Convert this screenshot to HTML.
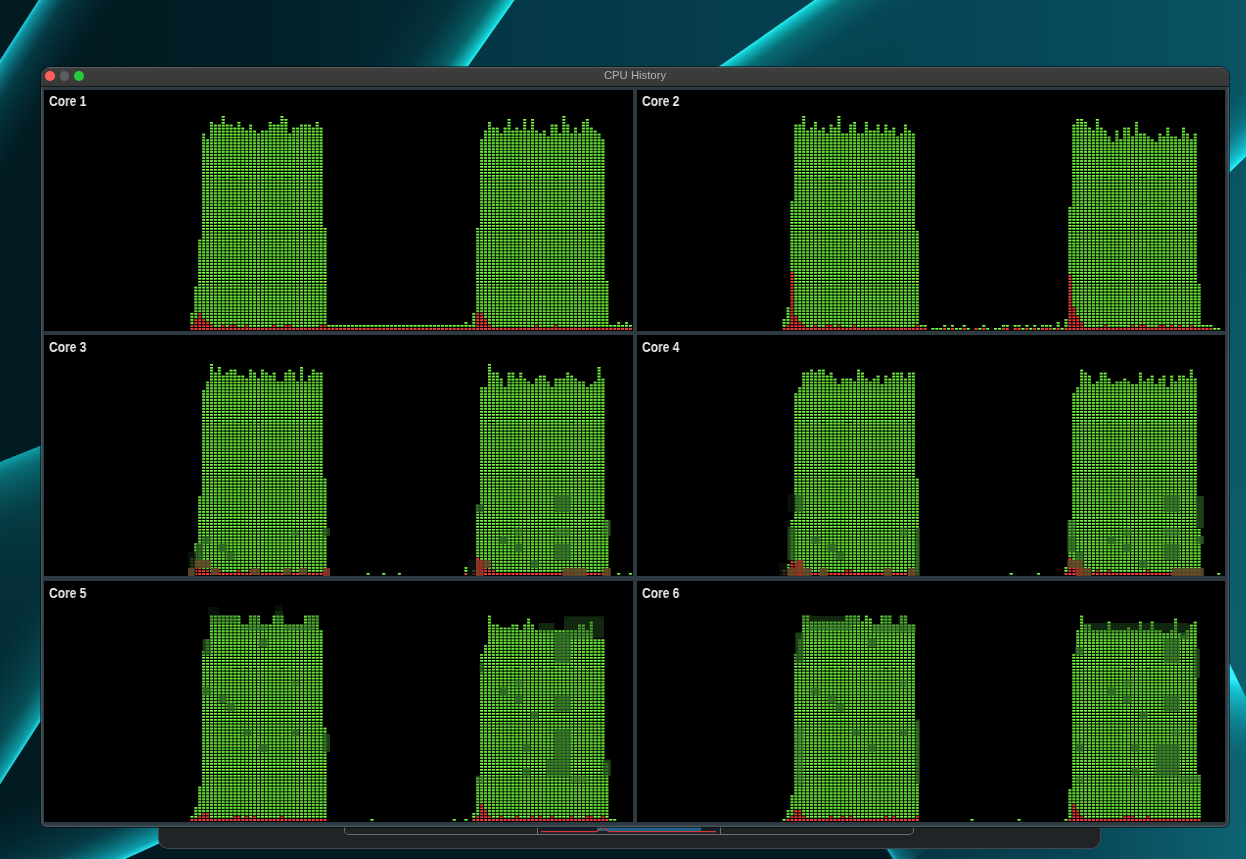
<!DOCTYPE html>
<html><head><meta charset="utf-8"><style>
html,body{margin:0;padding:0;width:1246px;height:859px;overflow:hidden;background:#021b22}
.abs{position:absolute}
.win{position:absolute;left:40.5px;top:66.5px;width:1188px;height:760px;border-radius:9px 9px 6px 6px;background:#2d3a41;box-shadow:0 0 0 1px rgba(0,10,15,0.6), inset 0 0 0 1.5px rgba(120,130,135,0.35);overflow:hidden}
.tb{position:absolute;left:0;top:0;width:1188px;height:20px;background:linear-gradient(#3e3e3e,#383838);border-top:1.5px solid #5c5c5c;box-sizing:border-box;border-bottom:1px solid #14191b}
.tl{position:absolute;top:3.6px;width:9.8px;height:9.8px;border-radius:50%}
.title{position:absolute;left:0;top:1.4px;width:1188px;text-align:center;font:11.3px "Liberation Sans",sans-serif;color:#b0b0b0;will-change:transform}
.panel{position:absolute;background:#000}
.lbl{position:absolute;font:bold 13.8px "Liberation Sans",sans-serif;color:#ececec;line-height:14px;transform:scaleX(0.87);transform-origin:0 0;will-change:transform}
.dock{position:absolute;left:159px;top:820px;width:941px;height:28px;background:#202426;border-radius:0 0 9px 9px;box-shadow:0 0 0 1px #45484b}
.tray{position:absolute;left:345px;top:820px;width:568px;height:14px;background:#1e2224;border-radius:0 0 4px 4px;box-shadow:0 0 0 1px #6a6d70}
.mini{position:absolute;left:538px;top:820px;width:182px;height:13.5px;background:#16212a;box-shadow:0 0 0 1px #707070}
</style></head><body>
<svg width="1246" height="859" style="position:absolute;left:0;top:0"><defs><linearGradient id="baseTop" gradientUnits="userSpaceOnUse" x1="60" y1="0" x2="470" y2="0"><stop offset="0" stop-color="#021a21"/><stop offset="0.45" stop-color="#021e26"/><stop offset="1" stop-color="#042c36"/></linearGradient><linearGradient id="tealTop" gradientUnits="userSpaceOnUse" x1="460" y1="0" x2="1246" y2="0"><stop offset="0" stop-color="#043644"/><stop offset="0.3" stop-color="#053d4b"/><stop offset="0.7" stop-color="#064756"/><stop offset="1" stop-color="#095363"/></linearGradient><linearGradient id="rstrip" gradientUnits="userSpaceOnUse" x1="0" y1="67" x2="0" y2="859"><stop offset="0" stop-color="#095363"/><stop offset="0.5" stop-color="#0c5a68"/><stop offset="1" stop-color="#0e6272"/></linearGradient><linearGradient id="brt" gradientUnits="userSpaceOnUse" x1="880" y1="0" x2="1246" y2="0"><stop offset="0" stop-color="#043240"/><stop offset="0.5" stop-color="#074454"/><stop offset="1" stop-color="#0e6474"/></linearGradient><linearGradient id="gA" gradientUnits="userSpaceOnUse" x1="45.0" y1="-10.0" x2="99.7" y2="25.1"><stop offset="0" stop-color="#20d0e0" stop-opacity="1"/><stop offset="0.06" stop-color="#12a8b8" stop-opacity="0.85"/><stop offset="0.35" stop-color="#0a6a78" stop-opacity="0.4"/><stop offset="1" stop-color="#06404c" stop-opacity="0"/></linearGradient><linearGradient id="gB" gradientUnits="userSpaceOnUse" x1="535.6" y1="-30.0" x2="462.0" y2="-81.7"><stop offset="0" stop-color="#28f0f4" stop-opacity="1"/><stop offset="0.04" stop-color="#12d8dc" stop-opacity="0.9"/><stop offset="0.2" stop-color="#0a9a9e" stop-opacity="0.5"/><stop offset="0.55" stop-color="#08626a" stop-opacity="0.15"/><stop offset="1" stop-color="#08505e" stop-opacity="0"/></linearGradient><linearGradient id="gC" gradientUnits="userSpaceOnUse" x1="843.2" y1="-20.0" x2="891.8" y2="49.8"><stop offset="0" stop-color="#28f0f4" stop-opacity="1"/><stop offset="0.04" stop-color="#12d8dc" stop-opacity="0.9"/><stop offset="0.2" stop-color="#0a9a9e" stop-opacity="0.5"/><stop offset="0.55" stop-color="#08626a" stop-opacity="0.15"/><stop offset="1" stop-color="#08505e" stop-opacity="0"/></linearGradient><linearGradient id="gD" gradientUnits="userSpaceOnUse" x1="1237" y1="165" x2="1196" y2="121.5"><stop offset="0" stop-color="#30f0fc" stop-opacity="1"/><stop offset="0.08" stop-color="#18d4e4" stop-opacity="0.9"/><stop offset="0.45" stop-color="#0c98a8" stop-opacity="0.45"/><stop offset="1" stop-color="#095363" stop-opacity="0"/></linearGradient><linearGradient id="lband" gradientUnits="userSpaceOnUse" x1="0" y1="450" x2="0" y2="780"><stop offset="0" stop-color="#07454c"/><stop offset="0.35" stop-color="#04303a"/><stop offset="1" stop-color="#03252c"/></linearGradient><linearGradient id="gE" gradientUnits="userSpaceOnUse" x1="-77.5" y1="493.0" x2="-44.1" y2="576.6"><stop offset="0" stop-color="#0ea0a8" stop-opacity="1"/><stop offset="0.15" stop-color="#0a7c84" stop-opacity="0.7"/><stop offset="0.6" stop-color="#06484e" stop-opacity="0.3"/><stop offset="1" stop-color="#04343a" stop-opacity="0"/></linearGradient><linearGradient id="gF" gradientUnits="userSpaceOnUse" x1="19.5" y1="754.0" x2="-47.8" y2="710.8"><stop offset="0" stop-color="#24e0ec" stop-opacity="1"/><stop offset="0.05" stop-color="#12b4c0" stop-opacity="0.85"/><stop offset="0.3" stop-color="#0a7880" stop-opacity="0.45"/><stop offset="1" stop-color="#06404c" stop-opacity="0"/></linearGradient><linearGradient id="gG" gradientUnits="userSpaceOnUse" x1="77.0" y1="881.0" x2="37.6" y2="794.6"><stop offset="0" stop-color="#22e4f0" stop-opacity="1"/><stop offset="0.06" stop-color="#10b4c4" stop-opacity="0.85"/><stop offset="0.35" stop-color="#0a6a78" stop-opacity="0.4"/><stop offset="1" stop-color="#06404c" stop-opacity="0"/></linearGradient><linearGradient id="gH" gradientUnits="userSpaceOnUse" x1="1237" y1="680" x2="1224" y2="770"><stop offset="0" stop-color="#30f0fc" stop-opacity="1"/><stop offset="0.1" stop-color="#18d0e0" stop-opacity="0.9"/><stop offset="0.5" stop-color="#0c9aa8" stop-opacity="0.5"/><stop offset="1" stop-color="#0c5a68" stop-opacity="0"/></linearGradient><linearGradient id="gI" gradientUnits="userSpaceOnUse" x1="889.5" y1="853.0" x2="931.7" y2="826.2"><stop offset="0" stop-color="#1cc8d8" stop-opacity="0.9"/><stop offset="0.1" stop-color="#0e98a8" stop-opacity="0.6"/><stop offset="0.5" stop-color="#08606e" stop-opacity="0.25"/><stop offset="1" stop-color="#08505e" stop-opacity="0"/></linearGradient></defs><rect x="0" y="0" width="1246" height="859" fill="#021b22"/><rect x="0" y="0" width="620" height="70" fill="url(#baseTop)"/><polygon points="527,-20 1266,-20 1266,90 449.9,90" fill="url(#tealTop)"/><rect x="1200" y="67" width="60" height="800" fill="url(#rstrip)"/><polygon points="870,826 1266,826 1266,870 899,870" fill="url(#brt)"/><polygon points="167.0,-200.0 -77.0,180.0 -22.3,215.1 221.7,-164.9" fill="url(#gA)"/><polygon points="655.0,-200.0 416.3,140.0 342.6,88.3 581.3,-251.7" fill="url(#gB)"/><polygon points="1101.8,-200.0 584.6,160.0 633.2,229.8 1150.4,-130.2" fill="url(#gC)"/><polygon points="1228,174 1250,152.7 1250,67 1228,67" fill="url(#gD)"/><polygon points="-5,464 45,444 45,714 -5,792" fill="url(#lband)"/><polygon points="-200.0,542.0 45.0,444.0 78.4,527.6 -166.6,625.6" fill="url(#gE)"/><polygon points="99.0,630.0 -60.0,878.0 -127.3,834.8 31.7,586.8" fill="url(#gF)"/><polygon points="180.0,834.0 -26.0,928.0 -65.4,841.6 140.6,747.6" fill="url(#gG)"/><polygon points="1228,660 1250,706 1250,800 1228,800" fill="url(#gH)"/><polygon points="880.0,838.0 899.0,868.0 941.2,841.2 922.2,811.2" fill="url(#gI)"/></svg>
<div class="dock"></div>
<div class="tray"></div>
<div class="mini"></div>
<svg class="abs" style="left:0;top:0" width="1246" height="859">
 <rect x="597" y="826.5" width="104" height="4.5" fill="#1f6388"/>
 <path d="M541 831.6 H596 C600 831.6 601 826.8 603 826.8 C605 826.8 606 831.6 610 831.6 H716" stroke="#d23a3a" stroke-width="1.3" fill="none"/>
</svg>
<div class="win">
 <div class="tb">
  <div class="tl" style="left:4.8px;background:#fe5f57"></div>
  <div class="tl" style="left:19.2px;background:#5b5e61"></div>
  <div class="tl" style="left:33.9px;background:#27c93f"></div>
  <div class="title">CPU History</div>
 </div>
</div>
<div class="panel" style="left:44px;top:90px;width:589px;height:241px"></div>
<div class="panel" style="left:637px;top:90px;width:588px;height:241px"></div>
<div class="panel" style="left:44px;top:335px;width:589px;height:241px"></div>
<div class="panel" style="left:637px;top:335px;width:588px;height:241px"></div>
<div class="panel" style="left:44px;top:581px;width:589px;height:241px"></div>
<div class="panel" style="left:637px;top:581px;width:588px;height:241px"></div>
<svg width="1246" height="859" style="position:absolute;left:0;top:0"><g><path d="M191.90 324.14V312.36M195.82 318.25V285.86M199.74 312.36V238.73M203.65 318.25V132.72M207.56 321.19V138.60M211.48 324.14V120.94M215.39 327.08V123.88M219.31 327.08V123.88M223.23 324.14V115.04M227.14 327.08V123.88M231.06 324.14V123.88M234.97 324.14V126.82M238.88 327.08V120.94M242.80 327.08V126.82M246.71 324.14V129.77M250.63 327.08V123.88M254.55 327.08V129.77M258.46 327.08V132.72M262.38 327.08V129.77M266.29 327.08V129.77M270.20 327.08V120.94M274.12 324.14V123.88M278.04 327.08V123.88M281.95 327.08V115.04M285.87 324.14V117.99M289.78 324.14V132.72M293.69 327.08V126.82M297.61 327.08V126.82M301.52 327.08V123.88M305.44 327.08V123.88M309.36 327.08V123.88M313.27 327.08V126.82M317.19 327.08V120.94M321.10 324.14V126.82M325.01 324.14V226.95M328.93 327.08V324.14M332.85 327.08V324.14M336.76 327.08V324.14M340.68 327.08V324.14M344.59 327.08V324.14M348.50 327.08V324.14M352.42 327.08V324.14M356.34 327.08V324.14M360.25 327.08V324.14M364.17 327.08V324.14M368.08 327.08V324.14M372.00 327.08V324.14M375.91 327.08V324.14M379.82 327.08V324.14M383.74 327.08V324.14M387.66 327.08V324.14M391.57 327.08V324.14M395.49 327.08V324.14M399.40 327.08V324.14M403.31 327.08V324.14M407.23 327.08V324.14M411.15 327.08V324.14M415.06 327.08V324.14M418.98 327.08V324.14M422.89 327.08V324.14M426.81 327.08V324.14M430.72 327.08V324.14M434.63 327.08V324.14M438.55 327.08V324.14M442.47 327.08V324.14M446.38 327.08V324.14M450.30 327.08V324.14M454.21 327.08V324.14M458.12 327.08V324.14M462.04 327.08V324.14M465.96 327.08V321.19M469.87 327.08V324.14M473.79 327.08V312.36M477.70 312.36V226.95M481.62 312.36V138.60M485.53 318.25V129.77M489.44 324.14V120.94M493.36 327.08V126.82M497.28 327.08V126.82M501.19 327.08V132.72M505.11 327.08V126.82M509.02 327.08V117.99M512.93 327.08V129.77M516.85 327.08V126.82M520.76 327.08V129.77M524.68 327.08V117.99M528.60 327.08V129.77M532.51 327.08V117.99M536.42 324.14V129.77M540.34 327.08V132.72M544.25 327.08V129.77M548.17 327.08V135.66M552.09 327.08V123.88M556.00 324.14V123.88M559.91 327.08V132.72M563.83 327.08V115.04M567.75 327.08V123.88M571.66 327.08V132.72M575.57 327.08V126.82M579.49 327.08V132.72M583.40 327.08V120.94M587.32 327.08V117.99M591.24 327.08V126.82M595.15 327.08V129.77M599.06 327.08V132.72M602.98 327.08V138.60M606.89 327.08V279.96M610.81 327.08V324.14M614.72 327.08V324.14M618.64 327.08V321.19M622.55 327.08V324.14M626.47 327.08V321.19M630.38 327.08V324.14" stroke="#3cc020" stroke-width="2.94" stroke-dasharray="1.96 0.985" fill="none"/><path d="M191.90 324.14V312.36M195.82 318.25V285.86M199.74 312.36V238.73M203.65 318.25V132.72M207.56 321.19V138.60M211.48 324.14V120.94M215.39 327.08V123.88M219.31 327.08V123.88M223.23 324.14V115.04M227.14 327.08V123.88M231.06 324.14V123.88M234.97 324.14V126.82M238.88 327.08V120.94M242.80 327.08V126.82M246.71 324.14V129.77M250.63 327.08V123.88M254.55 327.08V129.77M258.46 327.08V132.72M262.38 327.08V129.77M266.29 327.08V129.77M270.20 327.08V120.94M274.12 324.14V123.88M278.04 327.08V123.88M281.95 327.08V115.04M285.87 324.14V117.99M289.78 324.14V132.72M293.69 327.08V126.82M297.61 327.08V126.82M301.52 327.08V123.88M305.44 327.08V123.88M309.36 327.08V123.88M313.27 327.08V126.82M317.19 327.08V120.94M321.10 324.14V126.82M325.01 324.14V226.95M328.93 327.08V324.14M332.85 327.08V324.14M336.76 327.08V324.14M340.68 327.08V324.14M344.59 327.08V324.14M348.50 327.08V324.14M352.42 327.08V324.14M356.34 327.08V324.14M360.25 327.08V324.14M364.17 327.08V324.14M368.08 327.08V324.14M372.00 327.08V324.14M375.91 327.08V324.14M379.82 327.08V324.14M383.74 327.08V324.14M387.66 327.08V324.14M391.57 327.08V324.14M395.49 327.08V324.14M399.40 327.08V324.14M403.31 327.08V324.14M407.23 327.08V324.14M411.15 327.08V324.14M415.06 327.08V324.14M418.98 327.08V324.14M422.89 327.08V324.14M426.81 327.08V324.14M430.72 327.08V324.14M434.63 327.08V324.14M438.55 327.08V324.14M442.47 327.08V324.14M446.38 327.08V324.14M450.30 327.08V324.14M454.21 327.08V324.14M458.12 327.08V324.14M462.04 327.08V324.14M465.96 327.08V321.19M469.87 327.08V324.14M473.79 327.08V312.36M477.70 312.36V226.95M481.62 312.36V138.60M485.53 318.25V129.77M489.44 324.14V120.94M493.36 327.08V126.82M497.28 327.08V126.82M501.19 327.08V132.72M505.11 327.08V126.82M509.02 327.08V117.99M512.93 327.08V129.77M516.85 327.08V126.82M520.76 327.08V129.77M524.68 327.08V117.99M528.60 327.08V129.77M532.51 327.08V117.99M536.42 324.14V129.77M540.34 327.08V132.72M544.25 327.08V129.77M548.17 327.08V135.66M552.09 327.08V123.88M556.00 324.14V123.88M559.91 327.08V132.72M563.83 327.08V115.04M567.75 327.08V123.88M571.66 327.08V132.72M575.57 327.08V126.82M579.49 327.08V132.72M583.40 327.08V120.94M587.32 327.08V117.99M591.24 327.08V126.82M595.15 327.08V129.77M599.06 327.08V132.72M602.98 327.08V138.60M606.89 327.08V279.96M610.81 327.08V324.14M614.72 327.08V324.14M618.64 327.08V321.19M622.55 327.08V324.14M626.47 327.08V321.19M630.38 327.08V324.14" stroke="#90f050" stroke-width="2.94" stroke-dasharray="0 0.980 0.980 0.985" fill="none"/><path d="M191.90 330.03V324.14M195.82 330.03V318.25M199.74 330.03V312.36M203.65 330.03V318.25M207.56 330.03V321.19M211.48 330.03V324.14M215.39 330.03V327.08M219.31 330.03V327.08M223.23 330.03V324.14M227.14 330.03V327.08M231.06 330.03V324.14M234.97 330.03V324.14M238.88 330.03V327.08M242.80 330.03V327.08M246.71 330.03V324.14M250.63 330.03V327.08M254.55 330.03V327.08M258.46 330.03V327.08M262.38 330.03V327.08M266.29 330.03V327.08M270.20 330.03V327.08M274.12 330.03V324.14M278.04 330.03V327.08M281.95 330.03V327.08M285.87 330.03V324.14M289.78 330.03V324.14M293.69 330.03V327.08M297.61 330.03V327.08M301.52 330.03V327.08M305.44 330.03V327.08M309.36 330.03V327.08M313.27 330.03V327.08M317.19 330.03V327.08M321.10 330.03V324.14M325.01 330.03V324.14M328.93 330.03V327.08M332.85 330.03V327.08M336.76 330.03V327.08M340.68 330.03V327.08M344.59 330.03V327.08M348.50 330.03V327.08M352.42 330.03V327.08M356.34 330.03V327.08M360.25 330.03V327.08M364.17 330.03V327.08M368.08 330.03V327.08M372.00 330.03V327.08M375.91 330.03V327.08M379.82 330.03V327.08M383.74 330.03V327.08M387.66 330.03V327.08M391.57 330.03V327.08M395.49 330.03V327.08M399.40 330.03V327.08M403.31 330.03V327.08M407.23 330.03V327.08M411.15 330.03V327.08M415.06 330.03V327.08M418.98 330.03V327.08M422.89 330.03V327.08M426.81 330.03V327.08M430.72 330.03V327.08M434.63 330.03V327.08M438.55 330.03V327.08M442.47 330.03V327.08M446.38 330.03V327.08M450.30 330.03V327.08M454.21 330.03V327.08M458.12 330.03V327.08M462.04 330.03V327.08M465.96 330.03V327.08M469.87 330.03V327.08M473.79 330.03V327.08M477.70 330.03V312.36M481.62 330.03V312.36M485.53 330.03V318.25M489.44 330.03V324.14M493.36 330.03V327.08M497.28 330.03V327.08M501.19 330.03V327.08M505.11 330.03V327.08M509.02 330.03V327.08M512.93 330.03V327.08M516.85 330.03V327.08M520.76 330.03V327.08M524.68 330.03V327.08M528.60 330.03V327.08M532.51 330.03V327.08M536.42 330.03V324.14M540.34 330.03V327.08M544.25 330.03V327.08M548.17 330.03V327.08M552.09 330.03V327.08M556.00 330.03V324.14M559.91 330.03V327.08M563.83 330.03V327.08M567.75 330.03V327.08M571.66 330.03V327.08M575.57 330.03V327.08M579.49 330.03V327.08M583.40 330.03V327.08M587.32 330.03V327.08M591.24 330.03V327.08M595.15 330.03V327.08M599.06 330.03V327.08M602.98 330.03V327.08M606.89 330.03V327.08M610.81 330.03V327.08M614.72 330.03V327.08M618.64 330.03V327.08M622.55 330.03V327.08M626.47 330.03V327.08M630.38 330.03V327.08" stroke="#f03c3c" stroke-width="2.94" stroke-dasharray="1.96 0.985" fill="none"/><path d="M784.12 327.08V318.25M788.04 324.14V306.47M791.95 271.13V200.45M795.87 315.30V123.88M799.78 321.19V123.88M803.70 324.14V115.04M807.62 327.08V129.77M811.53 327.08V126.82M815.44 324.14V120.94M819.36 327.08V129.77M823.27 327.08V126.82M827.19 324.14V132.72M831.11 324.14V123.88M835.02 327.08V126.82M838.93 324.14V115.04M842.85 327.08V132.72M846.76 327.08V132.72M850.68 327.08V123.88M854.60 324.14V120.94M858.51 327.08V132.72M862.42 327.08V132.72M866.34 327.08V120.94M870.25 327.08V129.77M874.17 327.08V129.77M878.09 327.08V123.88M882.00 327.08V132.72M885.91 327.08V123.88M889.83 327.08V129.77M893.75 327.08V126.82M897.66 327.08V135.66M901.58 327.08V132.72M905.49 327.08V123.88M909.40 327.08V129.77M913.32 327.08V132.72M917.23 324.14V229.90M921.15 327.08V324.14M925.07 327.08V324.14M932.89 330.03V327.08M936.81 330.03V327.08M940.72 330.03V327.08M944.64 327.08V324.14M948.56 330.03V327.08M952.47 327.08V324.14M956.38 330.03V327.08M960.30 330.03V327.08M964.21 327.08V324.14M968.13 330.03V327.08M979.88 330.03V327.08M983.79 327.08V324.14M987.70 330.03V327.08M995.53 330.03V327.08M999.45 330.03V327.08M1003.37 327.08V324.14M1007.28 327.08V324.14M1015.11 327.08V324.14M1019.02 327.08V324.14M1022.94 330.03V327.08M1026.86 327.08V324.14M1030.77 330.03V327.08M1034.68 327.08V324.14M1038.60 330.03V327.08M1042.51 327.08V324.14M1046.43 327.08V324.14M1050.35 327.08V324.14M1054.26 330.03V327.08M1058.17 327.08V321.19M1062.09 330.03V327.08M1066.01 327.08V318.25M1069.92 274.07V206.34M1073.84 306.47V123.88M1077.75 315.30V117.99M1081.66 321.19V117.99M1085.58 327.08V120.94M1089.49 327.08V126.82M1093.41 327.08V129.77M1097.33 327.08V117.99M1101.24 327.08V126.82M1105.15 324.14V129.77M1109.07 327.08V135.66M1112.99 327.08V141.55M1116.90 327.08V129.77M1120.82 327.08V138.60M1124.73 327.08V126.82M1128.64 327.08V126.82M1132.56 324.14V135.66M1136.47 327.08V120.94M1140.39 324.14V132.72M1144.31 324.14V132.72M1148.22 327.08V135.66M1152.13 327.08V138.60M1156.05 327.08V141.55M1159.97 324.14V132.72M1163.88 324.14V135.66M1167.80 327.08V126.82M1171.71 324.14V135.66M1175.62 327.08V135.66M1179.54 324.14V138.60M1183.45 327.08V126.82M1187.37 327.08V132.72M1191.28 324.14V138.60M1195.20 327.08V132.72M1199.12 327.08V282.91M1203.03 327.08V324.14M1206.94 327.08V324.14M1210.86 327.08V324.14M1214.78 330.03V327.08M1218.69 330.03V327.08" stroke="#3cc020" stroke-width="2.94" stroke-dasharray="1.96 0.985" fill="none"/><path d="M784.12 327.08V318.25M788.04 324.14V306.47M791.95 271.13V200.45M795.87 315.30V123.88M799.78 321.19V123.88M803.70 324.14V115.04M807.62 327.08V129.77M811.53 327.08V126.82M815.44 324.14V120.94M819.36 327.08V129.77M823.27 327.08V126.82M827.19 324.14V132.72M831.11 324.14V123.88M835.02 327.08V126.82M838.93 324.14V115.04M842.85 327.08V132.72M846.76 327.08V132.72M850.68 327.08V123.88M854.60 324.14V120.94M858.51 327.08V132.72M862.42 327.08V132.72M866.34 327.08V120.94M870.25 327.08V129.77M874.17 327.08V129.77M878.09 327.08V123.88M882.00 327.08V132.72M885.91 327.08V123.88M889.83 327.08V129.77M893.75 327.08V126.82M897.66 327.08V135.66M901.58 327.08V132.72M905.49 327.08V123.88M909.40 327.08V129.77M913.32 327.08V132.72M917.23 324.14V229.90M921.15 327.08V324.14M925.07 327.08V324.14M932.89 330.03V327.08M936.81 330.03V327.08M940.72 330.03V327.08M944.64 327.08V324.14M948.56 330.03V327.08M952.47 327.08V324.14M956.38 330.03V327.08M960.30 330.03V327.08M964.21 327.08V324.14M968.13 330.03V327.08M979.88 330.03V327.08M983.79 327.08V324.14M987.70 330.03V327.08M995.53 330.03V327.08M999.45 330.03V327.08M1003.37 327.08V324.14M1007.28 327.08V324.14M1015.11 327.08V324.14M1019.02 327.08V324.14M1022.94 330.03V327.08M1026.86 327.08V324.14M1030.77 330.03V327.08M1034.68 327.08V324.14M1038.60 330.03V327.08M1042.51 327.08V324.14M1046.43 327.08V324.14M1050.35 327.08V324.14M1054.26 330.03V327.08M1058.17 327.08V321.19M1062.09 330.03V327.08M1066.01 327.08V318.25M1069.92 274.07V206.34M1073.84 306.47V123.88M1077.75 315.30V117.99M1081.66 321.19V117.99M1085.58 327.08V120.94M1089.49 327.08V126.82M1093.41 327.08V129.77M1097.33 327.08V117.99M1101.24 327.08V126.82M1105.15 324.14V129.77M1109.07 327.08V135.66M1112.99 327.08V141.55M1116.90 327.08V129.77M1120.82 327.08V138.60M1124.73 327.08V126.82M1128.64 327.08V126.82M1132.56 324.14V135.66M1136.47 327.08V120.94M1140.39 324.14V132.72M1144.31 324.14V132.72M1148.22 327.08V135.66M1152.13 327.08V138.60M1156.05 327.08V141.55M1159.97 324.14V132.72M1163.88 324.14V135.66M1167.80 327.08V126.82M1171.71 324.14V135.66M1175.62 327.08V135.66M1179.54 324.14V138.60M1183.45 327.08V126.82M1187.37 327.08V132.72M1191.28 324.14V138.60M1195.20 327.08V132.72M1199.12 327.08V282.91M1203.03 327.08V324.14M1206.94 327.08V324.14M1210.86 327.08V324.14M1214.78 330.03V327.08M1218.69 330.03V327.08" stroke="#90f050" stroke-width="2.94" stroke-dasharray="0 0.980 0.980 0.985" fill="none"/><path d="M784.12 330.03V327.08M788.04 330.03V324.14M791.95 330.03V271.13M795.87 330.03V315.30M799.78 330.03V321.19M803.70 330.03V324.14M807.62 330.03V327.08M811.53 330.03V327.08M815.44 330.03V324.14M819.36 330.03V327.08M823.27 330.03V327.08M827.19 330.03V324.14M831.11 330.03V324.14M835.02 330.03V327.08M838.93 330.03V324.14M842.85 330.03V327.08M846.76 330.03V327.08M850.68 330.03V327.08M854.60 330.03V324.14M858.51 330.03V327.08M862.42 330.03V327.08M866.34 330.03V327.08M870.25 330.03V327.08M874.17 330.03V327.08M878.09 330.03V327.08M882.00 330.03V327.08M885.91 330.03V327.08M889.83 330.03V327.08M893.75 330.03V327.08M897.66 330.03V327.08M901.58 330.03V327.08M905.49 330.03V327.08M909.40 330.03V327.08M913.32 330.03V327.08M917.23 330.03V324.14M921.15 330.03V327.08M925.07 330.03V327.08M944.64 330.03V327.08M952.47 330.03V327.08M964.21 330.03V327.08M975.96 330.03V327.08M983.79 330.03V327.08M1003.37 330.03V327.08M1007.28 330.03V327.08M1015.11 330.03V327.08M1019.02 330.03V327.08M1026.86 330.03V327.08M1034.68 330.03V327.08M1042.51 330.03V327.08M1046.43 330.03V327.08M1050.35 330.03V327.08M1058.17 330.03V327.08M1066.01 330.03V327.08M1069.92 330.03V274.07M1073.84 330.03V306.47M1077.75 330.03V315.30M1081.66 330.03V321.19M1085.58 330.03V327.08M1089.49 330.03V327.08M1093.41 330.03V327.08M1097.33 330.03V327.08M1101.24 330.03V327.08M1105.15 330.03V324.14M1109.07 330.03V327.08M1112.99 330.03V327.08M1116.90 330.03V327.08M1120.82 330.03V327.08M1124.73 330.03V327.08M1128.64 330.03V327.08M1132.56 330.03V324.14M1136.47 330.03V327.08M1140.39 330.03V324.14M1144.31 330.03V324.14M1148.22 330.03V327.08M1152.13 330.03V327.08M1156.05 330.03V327.08M1159.97 330.03V324.14M1163.88 330.03V324.14M1167.80 330.03V327.08M1171.71 330.03V324.14M1175.62 330.03V327.08M1179.54 330.03V324.14M1183.45 330.03V327.08M1187.37 330.03V327.08M1191.28 330.03V324.14M1195.20 330.03V327.08M1199.12 330.03V327.08M1203.03 330.03V327.08M1206.94 330.03V327.08M1210.86 330.03V327.08" stroke="#f03c3c" stroke-width="2.94" stroke-dasharray="1.96 0.985" fill="none"/><path d="M191.90 569.14V557.36M195.82 566.19V542.63M199.74 566.19V495.51M203.65 569.14V389.50M207.56 569.14V380.66M211.48 572.08V362.99M215.39 569.14V371.82M219.31 569.14V365.94M223.23 572.08V374.77M227.14 572.08V371.82M231.06 572.08V368.88M234.97 572.08V368.88M238.88 569.14V374.77M242.80 572.08V374.77M246.71 572.08V377.71M250.63 569.14V368.88M254.55 572.08V371.82M258.46 569.14V377.72M262.38 572.08V368.88M266.29 572.08V371.82M270.20 572.08V374.77M274.12 572.08V371.82M278.04 572.08V380.66M281.95 572.08V380.66M285.87 572.08V371.82M289.78 572.08V368.88M293.69 572.08V371.82M297.61 572.08V380.66M301.52 572.08V365.93M305.44 572.08V380.66M309.36 572.08V374.77M313.27 572.08V368.88M317.19 572.08V371.82M321.10 572.08V371.82M325.01 572.08V477.84M368.08 575.03V572.08M383.74 575.03V572.08M399.40 575.03V572.08M465.96 572.08V566.19M473.79 572.08V569.14M477.70 557.36V504.35M481.62 560.30V386.55M485.53 566.19V386.55M489.44 569.14V362.99M493.36 569.14V371.82M497.28 572.08V371.82M501.19 572.08V377.71M505.11 572.08V386.55M509.02 572.08V371.82M512.93 572.08V371.82M516.85 572.08V377.71M520.76 572.08V371.82M524.68 572.08V377.71M528.60 572.08V380.66M532.51 572.08V383.60M536.42 572.08V377.71M540.34 572.08V374.77M544.25 572.08V374.77M548.17 572.08V380.66M552.09 572.08V386.55M556.00 572.08V377.71M559.91 572.08V377.71M563.83 572.08V377.71M567.75 572.08V371.82M571.66 569.14V374.77M575.57 572.08V377.71M579.49 572.08V380.66M583.40 572.08V380.66M587.32 572.08V386.55M591.24 572.08V383.60M595.15 572.08V380.66M599.06 572.08V365.93M602.98 572.08V377.71M606.89 572.08V519.07M618.64 575.03V572.08M630.38 575.03V572.08" stroke="#3cc020" stroke-width="2.94" stroke-dasharray="1.96 0.985" fill="none"/><path d="M191.90 569.14V557.36M195.82 566.19V542.63M199.74 566.19V495.51M203.65 569.14V389.50M207.56 569.14V380.66M211.48 572.08V362.99M215.39 569.14V371.82M219.31 569.14V365.94M223.23 572.08V374.77M227.14 572.08V371.82M231.06 572.08V368.88M234.97 572.08V368.88M238.88 569.14V374.77M242.80 572.08V374.77M246.71 572.08V377.71M250.63 569.14V368.88M254.55 572.08V371.82M258.46 569.14V377.72M262.38 572.08V368.88M266.29 572.08V371.82M270.20 572.08V374.77M274.12 572.08V371.82M278.04 572.08V380.66M281.95 572.08V380.66M285.87 572.08V371.82M289.78 572.08V368.88M293.69 572.08V371.82M297.61 572.08V380.66M301.52 572.08V365.93M305.44 572.08V380.66M309.36 572.08V374.77M313.27 572.08V368.88M317.19 572.08V371.82M321.10 572.08V371.82M325.01 572.08V477.84M368.08 575.03V572.08M383.74 575.03V572.08M399.40 575.03V572.08M465.96 572.08V566.19M473.79 572.08V569.14M477.70 557.36V504.35M481.62 560.30V386.55M485.53 566.19V386.55M489.44 569.14V362.99M493.36 569.14V371.82M497.28 572.08V371.82M501.19 572.08V377.71M505.11 572.08V386.55M509.02 572.08V371.82M512.93 572.08V371.82M516.85 572.08V377.71M520.76 572.08V371.82M524.68 572.08V377.71M528.60 572.08V380.66M532.51 572.08V383.60M536.42 572.08V377.71M540.34 572.08V374.77M544.25 572.08V374.77M548.17 572.08V380.66M552.09 572.08V386.55M556.00 572.08V377.71M559.91 572.08V377.71M563.83 572.08V377.71M567.75 572.08V371.82M571.66 569.14V374.77M575.57 572.08V377.71M579.49 572.08V380.66M583.40 572.08V380.66M587.32 572.08V386.55M591.24 572.08V383.60M595.15 572.08V380.66M599.06 572.08V365.93M602.98 572.08V377.71M606.89 572.08V519.07M618.64 575.03V572.08M630.38 575.03V572.08" stroke="#90f050" stroke-width="2.94" stroke-dasharray="0 0.980 0.980 0.985" fill="none"/><path d="M191.90 575.03V569.14M195.82 575.03V566.19M199.74 575.03V566.19M203.65 575.03V569.14M207.56 575.03V569.14M211.48 575.03V572.08M215.39 575.03V569.14M219.31 575.03V569.14M223.23 575.03V572.08M227.14 575.03V572.08M231.06 575.03V572.08M234.97 575.03V572.08M238.88 575.03V569.14M242.80 575.03V572.08M246.71 575.03V572.08M250.63 575.03V569.14M254.55 575.03V572.08M258.46 575.03V569.14M262.38 575.03V572.08M266.29 575.03V572.08M270.20 575.03V572.08M274.12 575.03V572.08M278.04 575.03V572.08M281.95 575.03V572.08M285.87 575.03V572.08M289.78 575.03V572.08M293.69 575.03V572.08M297.61 575.03V572.08M301.52 575.03V572.08M305.44 575.03V572.08M309.36 575.03V572.08M313.27 575.03V572.08M317.19 575.03V572.08M321.10 575.03V572.08M325.01 575.03V572.08M465.96 575.03V572.08M473.79 575.03V572.08M477.70 575.03V557.36M481.62 575.03V560.30M485.53 575.03V566.19M489.44 575.03V569.14M493.36 575.03V569.14M497.28 575.03V572.08M501.19 575.03V572.08M505.11 575.03V572.08M509.02 575.03V572.08M512.93 575.03V572.08M516.85 575.03V572.08M520.76 575.03V572.08M524.68 575.03V572.08M528.60 575.03V572.08M532.51 575.03V572.08M536.42 575.03V572.08M540.34 575.03V572.08M544.25 575.03V572.08M548.17 575.03V572.08M552.09 575.03V572.08M556.00 575.03V572.08M559.91 575.03V572.08M563.83 575.03V572.08M567.75 575.03V572.08M571.66 575.03V569.14M575.57 575.03V572.08M579.49 575.03V572.08M583.40 575.03V572.08M587.32 575.03V572.08M591.24 575.03V572.08M595.15 575.03V572.08M599.06 575.03V572.08M602.98 575.03V572.08M606.89 575.03V572.08" stroke="#f03c3c" stroke-width="2.94" stroke-dasharray="1.96 0.985" fill="none"/><path d="M784.12 572.08V569.14M788.04 569.14V563.25M791.95 560.30V519.07M795.87 563.25V392.44M799.78 572.08V386.55M803.70 572.08V371.82M807.62 569.14V371.82M811.53 572.08V368.88M815.44 572.08V371.82M819.36 572.08V368.88M823.27 569.14V368.88M827.19 572.08V374.77M831.11 572.08V371.82M835.02 572.08V377.71M838.93 572.08V383.60M842.85 572.08V377.71M846.76 569.14V377.72M850.68 569.14V377.72M854.60 572.08V380.66M858.51 572.08V368.88M862.42 572.08V371.82M866.34 572.08V377.71M870.25 572.08V380.66M874.17 572.08V377.71M878.09 572.08V374.77M882.00 572.08V383.60M885.91 572.08V374.77M889.83 572.08V377.71M893.75 572.08V371.82M897.66 572.08V371.82M901.58 572.08V371.82M905.49 572.08V377.71M909.40 569.14V371.82M913.32 572.08V371.82M917.23 572.08V477.84M1011.19 575.03V572.08M1038.60 575.03V572.08M1066.01 572.08V566.19M1069.92 557.36V519.08M1073.84 563.25V392.44M1077.75 569.14V386.55M1081.66 572.08V368.88M1085.58 572.08V371.82M1089.49 572.08V374.77M1093.41 572.08V383.60M1097.33 569.14V380.66M1101.24 572.08V371.82M1105.15 572.08V371.82M1109.07 569.14V377.72M1112.99 572.08V383.60M1116.90 572.08V380.66M1120.82 572.08V380.66M1124.73 572.08V377.71M1128.64 572.08V380.66M1132.56 572.08V383.60M1136.47 572.08V383.60M1140.39 572.08V371.82M1144.31 572.08V380.66M1148.22 569.14V377.72M1152.13 572.08V374.77M1156.05 572.08V383.60M1159.97 572.08V377.71M1163.88 572.08V374.77M1167.80 572.08V386.55M1171.71 572.08V374.77M1175.62 572.08V380.66M1179.54 572.08V374.77M1183.45 572.08V374.77M1187.37 572.08V377.71M1191.28 572.08V368.88M1195.20 572.08V377.71M1199.12 572.08V527.91M1218.69 575.03V572.08" stroke="#3cc020" stroke-width="2.94" stroke-dasharray="1.96 0.985" fill="none"/><path d="M784.12 572.08V569.14M788.04 569.14V563.25M791.95 560.30V519.07M795.87 563.25V392.44M799.78 572.08V386.55M803.70 572.08V371.82M807.62 569.14V371.82M811.53 572.08V368.88M815.44 572.08V371.82M819.36 572.08V368.88M823.27 569.14V368.88M827.19 572.08V374.77M831.11 572.08V371.82M835.02 572.08V377.71M838.93 572.08V383.60M842.85 572.08V377.71M846.76 569.14V377.72M850.68 569.14V377.72M854.60 572.08V380.66M858.51 572.08V368.88M862.42 572.08V371.82M866.34 572.08V377.71M870.25 572.08V380.66M874.17 572.08V377.71M878.09 572.08V374.77M882.00 572.08V383.60M885.91 572.08V374.77M889.83 572.08V377.71M893.75 572.08V371.82M897.66 572.08V371.82M901.58 572.08V371.82M905.49 572.08V377.71M909.40 569.14V371.82M913.32 572.08V371.82M917.23 572.08V477.84M1011.19 575.03V572.08M1038.60 575.03V572.08M1066.01 572.08V566.19M1069.92 557.36V519.08M1073.84 563.25V392.44M1077.75 569.14V386.55M1081.66 572.08V368.88M1085.58 572.08V371.82M1089.49 572.08V374.77M1093.41 572.08V383.60M1097.33 569.14V380.66M1101.24 572.08V371.82M1105.15 572.08V371.82M1109.07 569.14V377.72M1112.99 572.08V383.60M1116.90 572.08V380.66M1120.82 572.08V380.66M1124.73 572.08V377.71M1128.64 572.08V380.66M1132.56 572.08V383.60M1136.47 572.08V383.60M1140.39 572.08V371.82M1144.31 572.08V380.66M1148.22 569.14V377.72M1152.13 572.08V374.77M1156.05 572.08V383.60M1159.97 572.08V377.71M1163.88 572.08V374.77M1167.80 572.08V386.55M1171.71 572.08V374.77M1175.62 572.08V380.66M1179.54 572.08V374.77M1183.45 572.08V374.77M1187.37 572.08V377.71M1191.28 572.08V368.88M1195.20 572.08V377.71M1199.12 572.08V527.91M1218.69 575.03V572.08" stroke="#90f050" stroke-width="2.94" stroke-dasharray="0 0.980 0.980 0.985" fill="none"/><path d="M784.12 575.03V572.08M788.04 575.03V569.14M791.95 575.03V560.30M795.87 575.03V563.25M799.78 575.03V572.08M803.70 575.03V572.08M807.62 575.03V569.14M811.53 575.03V572.08M815.44 575.03V572.08M819.36 575.03V572.08M823.27 575.03V569.14M827.19 575.03V572.08M831.11 575.03V572.08M835.02 575.03V572.08M838.93 575.03V572.08M842.85 575.03V572.08M846.76 575.03V569.14M850.68 575.03V569.14M854.60 575.03V572.08M858.51 575.03V572.08M862.42 575.03V572.08M866.34 575.03V572.08M870.25 575.03V572.08M874.17 575.03V572.08M878.09 575.03V572.08M882.00 575.03V572.08M885.91 575.03V572.08M889.83 575.03V572.08M893.75 575.03V572.08M897.66 575.03V572.08M901.58 575.03V572.08M905.49 575.03V572.08M909.40 575.03V569.14M913.32 575.03V572.08M917.23 575.03V572.08M1066.01 575.03V572.08M1069.92 575.03V557.36M1073.84 575.03V563.25M1077.75 575.03V569.14M1081.66 575.03V572.08M1085.58 575.03V572.08M1089.49 575.03V572.08M1093.41 575.03V572.08M1097.33 575.03V569.14M1101.24 575.03V572.08M1105.15 575.03V572.08M1109.07 575.03V569.14M1112.99 575.03V572.08M1116.90 575.03V572.08M1120.82 575.03V572.08M1124.73 575.03V572.08M1128.64 575.03V572.08M1132.56 575.03V572.08M1136.47 575.03V572.08M1140.39 575.03V572.08M1144.31 575.03V572.08M1148.22 575.03V569.14M1152.13 575.03V572.08M1156.05 575.03V572.08M1159.97 575.03V572.08M1163.88 575.03V572.08M1167.80 575.03V572.08M1171.71 575.03V572.08M1175.62 575.03V572.08M1179.54 575.03V572.08M1183.45 575.03V572.08M1187.37 575.03V572.08M1191.28 575.03V572.08M1195.20 575.03V572.08M1199.12 575.03V572.08" stroke="#f03c3c" stroke-width="2.94" stroke-dasharray="1.96 0.985" fill="none"/><path d="M191.90 818.08V815.14M195.82 818.08V806.30M199.74 815.14V785.69M203.65 812.19V650.22M207.56 812.19V638.44M211.48 818.08V614.88M215.39 818.08V614.88M219.31 818.08V614.88M223.23 818.08V614.88M227.14 818.08V614.88M231.06 818.08V614.88M234.97 815.14V614.88M238.88 815.14V614.88M242.80 818.08V623.71M246.71 815.14V623.72M250.63 818.08V614.88M254.55 815.14V614.88M258.46 818.08V614.88M262.38 818.08V623.71M266.29 818.08V623.71M270.20 818.08V623.71M274.12 818.08V614.88M278.04 818.08V614.88M281.95 815.14V614.88M285.87 818.08V623.71M289.78 818.08V623.71M293.69 818.08V623.71M297.61 818.08V623.71M301.52 818.08V623.71M305.44 818.08V614.88M309.36 818.08V614.88M313.27 818.08V614.88M317.19 818.08V614.88M321.10 818.08V629.60M325.01 818.08V726.79M372.00 821.03V818.08M454.21 821.03V818.08M465.96 821.03V818.08M473.79 818.08V812.19M477.70 815.14V776.86M481.62 803.36V653.16M485.53 809.25V644.33M489.44 815.14V614.88M493.36 818.08V623.71M497.28 818.08V623.71M501.19 815.14V626.66M505.11 818.08V626.66M509.02 818.08V626.66M512.93 818.08V623.71M516.85 815.14V623.72M520.76 818.08V629.60M524.68 818.08V623.71M528.60 818.08V617.82M532.51 815.14V623.72M536.42 818.08V629.60M540.34 815.14V629.61M544.25 818.08V629.60M548.17 818.08V629.60M552.09 815.14V629.61M556.00 818.08V629.60M559.91 818.08V629.60M563.83 818.08V629.60M567.75 818.08V629.60M571.66 815.14V629.61M575.57 818.08V629.60M579.49 818.08V623.71M583.40 818.08V623.71M587.32 815.14V629.61M591.24 815.14V620.77M595.15 818.08V638.44M599.06 818.08V638.44M602.98 815.14V638.44M606.89 818.08V762.13M610.81 821.03V818.08M614.72 821.03V818.08" stroke="#3cc020" stroke-width="2.94" stroke-dasharray="1.96 0.985" fill="none"/><path d="M191.90 818.08V815.14M195.82 818.08V806.30M199.74 815.14V785.69M203.65 812.19V650.22M207.56 812.19V638.44M211.48 818.08V614.88M215.39 818.08V614.88M219.31 818.08V614.88M223.23 818.08V614.88M227.14 818.08V614.88M231.06 818.08V614.88M234.97 815.14V614.88M238.88 815.14V614.88M242.80 818.08V623.71M246.71 815.14V623.72M250.63 818.08V614.88M254.55 815.14V614.88M258.46 818.08V614.88M262.38 818.08V623.71M266.29 818.08V623.71M270.20 818.08V623.71M274.12 818.08V614.88M278.04 818.08V614.88M281.95 815.14V614.88M285.87 818.08V623.71M289.78 818.08V623.71M293.69 818.08V623.71M297.61 818.08V623.71M301.52 818.08V623.71M305.44 818.08V614.88M309.36 818.08V614.88M313.27 818.08V614.88M317.19 818.08V614.88M321.10 818.08V629.60M325.01 818.08V726.79M372.00 821.03V818.08M454.21 821.03V818.08M465.96 821.03V818.08M473.79 818.08V812.19M477.70 815.14V776.86M481.62 803.36V653.16M485.53 809.25V644.33M489.44 815.14V614.88M493.36 818.08V623.71M497.28 818.08V623.71M501.19 815.14V626.66M505.11 818.08V626.66M509.02 818.08V626.66M512.93 818.08V623.71M516.85 815.14V623.72M520.76 818.08V629.60M524.68 818.08V623.71M528.60 818.08V617.82M532.51 815.14V623.72M536.42 818.08V629.60M540.34 815.14V629.61M544.25 818.08V629.60M548.17 818.08V629.60M552.09 815.14V629.61M556.00 818.08V629.60M559.91 818.08V629.60M563.83 818.08V629.60M567.75 818.08V629.60M571.66 815.14V629.61M575.57 818.08V629.60M579.49 818.08V623.71M583.40 818.08V623.71M587.32 815.14V629.61M591.24 815.14V620.77M595.15 818.08V638.44M599.06 818.08V638.44M602.98 815.14V638.44M606.89 818.08V762.13M610.81 821.03V818.08M614.72 821.03V818.08" stroke="#90f050" stroke-width="2.94" stroke-dasharray="0 0.980 0.980 0.985" fill="none"/><path d="M191.90 821.03V818.08M195.82 821.03V818.08M199.74 821.03V815.14M203.65 821.03V812.19M207.56 821.03V812.19M211.48 821.03V818.08M215.39 821.03V818.08M219.31 821.03V818.08M223.23 821.03V818.08M227.14 821.03V818.08M231.06 821.03V818.08M234.97 821.03V815.14M238.88 821.03V815.14M242.80 821.03V818.08M246.71 821.03V815.14M250.63 821.03V818.08M254.55 821.03V815.14M258.46 821.03V818.08M262.38 821.03V818.08M266.29 821.03V818.08M270.20 821.03V818.08M274.12 821.03V818.08M278.04 821.03V818.08M281.95 821.03V815.14M285.87 821.03V818.08M289.78 821.03V818.08M293.69 821.03V818.08M297.61 821.03V818.08M301.52 821.03V818.08M305.44 821.03V818.08M309.36 821.03V818.08M313.27 821.03V818.08M317.19 821.03V818.08M321.10 821.03V818.08M325.01 821.03V818.08M473.79 821.03V818.08M477.70 821.03V815.14M481.62 821.03V803.36M485.53 821.03V809.25M489.44 821.03V815.14M493.36 821.03V818.08M497.28 821.03V818.08M501.19 821.03V815.14M505.11 821.03V818.08M509.02 821.03V818.08M512.93 821.03V818.08M516.85 821.03V815.14M520.76 821.03V818.08M524.68 821.03V818.08M528.60 821.03V818.08M532.51 821.03V815.14M536.42 821.03V818.08M540.34 821.03V815.14M544.25 821.03V818.08M548.17 821.03V818.08M552.09 821.03V815.14M556.00 821.03V818.08M559.91 821.03V818.08M563.83 821.03V818.08M567.75 821.03V818.08M571.66 821.03V815.14M575.57 821.03V818.08M579.49 821.03V818.08M583.40 821.03V818.08M587.32 821.03V815.14M591.24 821.03V815.14M595.15 821.03V818.08M599.06 821.03V818.08M602.98 821.03V815.14M606.89 821.03V818.08" stroke="#f03c3c" stroke-width="2.94" stroke-dasharray="1.96 0.985" fill="none"/><path d="M784.12 821.03V818.08M788.04 818.08V809.25M791.95 815.14V794.52M795.87 809.25V653.16M799.78 809.25V638.44M803.70 815.14V614.88M807.62 818.08V614.88M811.53 818.08V620.77M815.44 818.08V620.77M819.36 818.08V620.77M823.27 818.08V620.77M827.19 818.08V620.77M831.11 815.14V620.77M835.02 818.08V620.77M838.93 818.08V620.77M842.85 815.14V620.77M846.76 818.08V614.88M850.68 815.14V614.88M854.60 818.08V614.88M858.51 818.08V614.88M862.42 818.08V620.77M866.34 818.08V614.88M870.25 818.08V617.82M874.17 818.08V623.71M878.09 818.08V623.71M882.00 818.08V614.88M885.91 815.14V614.88M889.83 818.08V614.88M893.75 815.14V623.72M897.66 818.08V623.71M901.58 818.08V614.88M905.49 818.08V614.88M909.40 818.08V623.71M913.32 818.08V623.71M917.23 815.14V720.90M972.04 821.03V818.08M1019.02 821.03V818.08M1066.01 821.03V818.08M1069.92 818.08V788.63M1073.84 803.36V653.16M1077.75 809.25V629.61M1081.66 815.14V614.88M1085.58 818.08V623.71M1089.49 818.08V623.71M1093.41 818.08V629.60M1097.33 818.08V629.60M1101.24 818.08V629.60M1105.15 818.08V629.60M1109.07 818.08V620.77M1112.99 818.08V629.60M1116.90 818.08V629.60M1120.82 818.08V629.60M1124.73 815.14V629.61M1128.64 815.14V626.66M1132.56 815.14V629.61M1136.47 818.08V629.60M1140.39 818.08V620.77M1144.31 818.08V629.60M1148.22 815.14V629.61M1152.13 818.08V620.77M1156.05 818.08V629.60M1159.97 818.08V629.60M1163.88 818.08V632.55M1167.80 818.08V632.55M1171.71 818.08V629.60M1175.62 818.08V617.82M1179.54 818.08V632.55M1183.45 818.08V635.49M1187.37 818.08V629.60M1191.28 818.08V623.71M1195.20 818.08V620.77M1199.12 818.08V773.91" stroke="#3cc020" stroke-width="2.94" stroke-dasharray="1.96 0.985" fill="none"/><path d="M784.12 821.03V818.08M788.04 818.08V809.25M791.95 815.14V794.52M795.87 809.25V653.16M799.78 809.25V638.44M803.70 815.14V614.88M807.62 818.08V614.88M811.53 818.08V620.77M815.44 818.08V620.77M819.36 818.08V620.77M823.27 818.08V620.77M827.19 818.08V620.77M831.11 815.14V620.77M835.02 818.08V620.77M838.93 818.08V620.77M842.85 815.14V620.77M846.76 818.08V614.88M850.68 815.14V614.88M854.60 818.08V614.88M858.51 818.08V614.88M862.42 818.08V620.77M866.34 818.08V614.88M870.25 818.08V617.82M874.17 818.08V623.71M878.09 818.08V623.71M882.00 818.08V614.88M885.91 815.14V614.88M889.83 818.08V614.88M893.75 815.14V623.72M897.66 818.08V623.71M901.58 818.08V614.88M905.49 818.08V614.88M909.40 818.08V623.71M913.32 818.08V623.71M917.23 815.14V720.90M972.04 821.03V818.08M1019.02 821.03V818.08M1066.01 821.03V818.08M1069.92 818.08V788.63M1073.84 803.36V653.16M1077.75 809.25V629.61M1081.66 815.14V614.88M1085.58 818.08V623.71M1089.49 818.08V623.71M1093.41 818.08V629.60M1097.33 818.08V629.60M1101.24 818.08V629.60M1105.15 818.08V629.60M1109.07 818.08V620.77M1112.99 818.08V629.60M1116.90 818.08V629.60M1120.82 818.08V629.60M1124.73 815.14V629.61M1128.64 815.14V626.66M1132.56 815.14V629.61M1136.47 818.08V629.60M1140.39 818.08V620.77M1144.31 818.08V629.60M1148.22 815.14V629.61M1152.13 818.08V620.77M1156.05 818.08V629.60M1159.97 818.08V629.60M1163.88 818.08V632.55M1167.80 818.08V632.55M1171.71 818.08V629.60M1175.62 818.08V617.82M1179.54 818.08V632.55M1183.45 818.08V635.49M1187.37 818.08V629.60M1191.28 818.08V623.71M1195.20 818.08V620.77M1199.12 818.08V773.91" stroke="#90f050" stroke-width="2.94" stroke-dasharray="0 0.980 0.980 0.985" fill="none"/><path d="M788.04 821.03V818.08M791.95 821.03V815.14M795.87 821.03V809.25M799.78 821.03V809.25M803.70 821.03V815.14M807.62 821.03V818.08M811.53 821.03V818.08M815.44 821.03V818.08M819.36 821.03V818.08M823.27 821.03V818.08M827.19 821.03V818.08M831.11 821.03V815.14M835.02 821.03V818.08M838.93 821.03V818.08M842.85 821.03V815.14M846.76 821.03V818.08M850.68 821.03V815.14M854.60 821.03V818.08M858.51 821.03V818.08M862.42 821.03V818.08M866.34 821.03V818.08M870.25 821.03V818.08M874.17 821.03V818.08M878.09 821.03V818.08M882.00 821.03V818.08M885.91 821.03V815.14M889.83 821.03V818.08M893.75 821.03V815.14M897.66 821.03V818.08M901.58 821.03V818.08M905.49 821.03V818.08M909.40 821.03V818.08M913.32 821.03V818.08M917.23 821.03V815.14M1069.92 821.03V818.08M1073.84 821.03V803.36M1077.75 821.03V809.25M1081.66 821.03V815.14M1085.58 821.03V818.08M1089.49 821.03V818.08M1093.41 821.03V818.08M1097.33 821.03V818.08M1101.24 821.03V818.08M1105.15 821.03V818.08M1109.07 821.03V818.08M1112.99 821.03V818.08M1116.90 821.03V818.08M1120.82 821.03V818.08M1124.73 821.03V815.14M1128.64 821.03V815.14M1132.56 821.03V815.14M1136.47 821.03V818.08M1140.39 821.03V818.08M1144.31 821.03V818.08M1148.22 821.03V815.14M1152.13 821.03V818.08M1156.05 821.03V818.08M1159.97 821.03V818.08M1163.88 821.03V818.08M1167.80 821.03V818.08M1171.71 821.03V818.08M1175.62 821.03V818.08M1179.54 821.03V818.08M1183.45 821.03V818.08M1187.37 821.03V818.08M1191.28 821.03V818.08M1195.20 821.03V818.08M1199.12 821.03V818.08" stroke="#f03c3c" stroke-width="2.94" stroke-dasharray="1.96 0.985" fill="none"/><g><rect x="202.7" y="536" width="8.1" height="8.0" fill="#2e6625" fill-opacity="0.78"/><rect x="218.8" y="544" width="8.0" height="8.0" fill="#2e6625" fill-opacity="0.78"/><rect x="226.8" y="552" width="8.0" height="8.0" fill="#2e6625" fill-opacity="0.78"/><rect x="196" y="544" width="6.7" height="17.0" fill="#28561f" fill-opacity="0.75"/><rect x="188" y="552" width="8.0" height="23.0" fill="#0c140c" fill-opacity="0.75"/><rect x="194.7" y="560" width="16.1" height="8.0" fill="#5e4a28" fill-opacity="0.9"/><rect x="188" y="568" width="6.7" height="8.0" fill="#5e4a28" fill-opacity="0.9"/><rect x="210.8" y="568" width="8.0" height="7.0" fill="#5e4a28" fill-opacity="0.9"/><rect x="251" y="568" width="9.0" height="7.0" fill="#5e4a28" fill-opacity="0.9"/><rect x="283" y="568" width="8.0" height="7.0" fill="#5e4a28" fill-opacity="0.9"/><rect x="299" y="568" width="8.0" height="7.0" fill="#5e4a28" fill-opacity="0.9"/><rect x="291" y="531" width="8.0" height="5.0" fill="#3a7630" fill-opacity="0.55"/><rect x="323" y="528" width="7.0" height="8.0" fill="#28561f" fill-opacity="0.75"/><rect x="323" y="568" width="7.0" height="8.0" fill="#8a3626" fill-opacity="0.9"/><rect x="554.6" y="494.6" width="16.1" height="17.4" fill="#2e6625" fill-opacity="0.78"/><rect x="475.7" y="504" width="8.0" height="8.0" fill="#28561f" fill-opacity="0.75"/><rect x="499.8" y="536" width="8.0" height="8.0" fill="#2e6625" fill-opacity="0.78"/><rect x="514.5" y="528" width="8.0" height="8.0" fill="#3a7630" fill-opacity="0.55"/><rect x="514.5" y="544" width="8.0" height="8.0" fill="#2e6625" fill-opacity="0.78"/><rect x="554.6" y="528" width="16.1" height="8.0" fill="#3a7630" fill-opacity="0.55"/><rect x="554.6" y="544" width="16.1" height="16.0" fill="#2e6625" fill-opacity="0.78"/><rect x="530.5" y="560" width="8.1" height="8.0" fill="#2e6625" fill-opacity="0.78"/><rect x="602.8" y="520" width="8.0" height="16.0" fill="#3a7630" fill-opacity="0.55"/><rect x="475.7" y="560" width="8.0" height="16.0" fill="#8a3626" fill-opacity="0.9"/><rect x="483.7" y="560" width="6.7" height="8.0" fill="#5e4a28" fill-opacity="0.9"/><rect x="562.7" y="568" width="24.0" height="8.0" fill="#5e4a28" fill-opacity="0.9"/><rect x="602.8" y="568" width="8.0" height="8.0" fill="#5e4a28" fill-opacity="0.9"/><rect x="467.7" y="560" width="8.0" height="16.0" fill="#0c140c" fill-opacity="0.75"/><rect x="795.4" y="494.6" width="8.0" height="17.4" fill="#2e6625" fill-opacity="0.78"/><rect x="787.4" y="494.6" width="8.0" height="17.4" fill="#0c140c" fill-opacity="0.75"/><rect x="787.4" y="526.7" width="8.0" height="33.3" fill="#28561f" fill-opacity="0.75"/><rect x="811.5" y="536" width="8.0" height="8.0" fill="#2e6625" fill-opacity="0.78"/><rect x="827.5" y="544" width="8.0" height="8.0" fill="#2e6625" fill-opacity="0.78"/><rect x="835.5" y="552" width="8.1" height="8.0" fill="#2e6625" fill-opacity="0.78"/><rect x="899.8" y="528" width="8.0" height="8.0" fill="#3a7630" fill-opacity="0.55"/><rect x="915.8" y="528" width="4.0" height="48.0" fill="#28561f" fill-opacity="0.75"/><rect x="787.4" y="568" width="8.0" height="8.0" fill="#5e4a28" fill-opacity="0.9"/><rect x="795.4" y="560" width="8.0" height="16.0" fill="#8a3626" fill-opacity="0.9"/><rect x="803.4" y="568" width="8.1" height="8.0" fill="#5e4a28" fill-opacity="0.9"/><rect x="819.5" y="568" width="8.0" height="8.0" fill="#5e4a28" fill-opacity="0.9"/><rect x="883.7" y="568" width="8.0" height="8.0" fill="#5e4a28" fill-opacity="0.9"/><rect x="907.8" y="568" width="8.0" height="8.0" fill="#5e4a28" fill-opacity="0.9"/><rect x="779.4" y="563" width="8.0" height="13.0" fill="#0c140c" fill-opacity="0.75"/><rect x="1163.7" y="494.6" width="16.0" height="17.4" fill="#2e6625" fill-opacity="0.78"/><rect x="1195.8" y="496" width="8.0" height="32.0" fill="#28561f" fill-opacity="0.75"/><rect x="1067.4" y="520" width="8.0" height="16.0" fill="#3a7630" fill-opacity="0.55"/><rect x="1107.5" y="536" width="8.0" height="8.0" fill="#2e6625" fill-opacity="0.78"/><rect x="1123.6" y="528" width="8.0" height="8.0" fill="#3a7630" fill-opacity="0.55"/><rect x="1123.6" y="544" width="8.0" height="8.0" fill="#2e6625" fill-opacity="0.78"/><rect x="1163.7" y="528" width="16.0" height="8.0" fill="#3a7630" fill-opacity="0.55"/><rect x="1163.7" y="544" width="16.0" height="16.0" fill="#2e6625" fill-opacity="0.78"/><rect x="1139.6" y="560" width="8.0" height="8.0" fill="#2e6625" fill-opacity="0.78"/><rect x="1195.8" y="536" width="8.0" height="8.0" fill="#2e6625" fill-opacity="0.78"/><rect x="1067.4" y="536" width="8.0" height="16.0" fill="#2e6625" fill-opacity="0.78"/><rect x="1075.4" y="552" width="8.0" height="8.0" fill="#2e6625" fill-opacity="0.78"/><rect x="1067.4" y="560" width="16.0" height="8.0" fill="#5e4a28" fill-opacity="0.9"/><rect x="1075.4" y="568" width="8.0" height="8.0" fill="#8a3626" fill-opacity="0.9"/><rect x="1083.4" y="568" width="8.0" height="8.0" fill="#5e4a28" fill-opacity="0.9"/><rect x="1171.7" y="568" width="24.1" height="8.0" fill="#5e4a28" fill-opacity="0.9"/><rect x="1195.8" y="568" width="8.0" height="8.0" fill="#5e4a28" fill-opacity="0.9"/><rect x="202.7" y="639" width="8.1" height="16.0" fill="#28561f" fill-opacity="0.75"/><rect x="259" y="639" width="8.0" height="8.0" fill="#2e6625" fill-opacity="0.78"/><rect x="202.7" y="687" width="8.1" height="8.0" fill="#2e6625" fill-opacity="0.78"/><rect x="218.8" y="695" width="8.0" height="8.0" fill="#2e6625" fill-opacity="0.78"/><rect x="226.8" y="703" width="8.0" height="8.0" fill="#2e6625" fill-opacity="0.78"/><rect x="291" y="681" width="8.0" height="6.0" fill="#3a7630" fill-opacity="0.55"/><rect x="243" y="729" width="8.0" height="7.0" fill="#2e6625" fill-opacity="0.78"/><rect x="291" y="729" width="8.0" height="7.0" fill="#2e6625" fill-opacity="0.78"/><rect x="259" y="744" width="8.0" height="8.0" fill="#2e6625" fill-opacity="0.78"/><rect x="323" y="734" width="7.0" height="18.0" fill="#28561f" fill-opacity="0.75"/><rect x="209.4" y="615" width="29.5" height="8.0" fill="#2c5c24" fill-opacity="0.42"/><rect x="249.6" y="615" width="9.4" height="8.0" fill="#2c5c24" fill-opacity="0.42"/><rect x="275" y="611" width="8.0" height="12.0" fill="#2c5c24" fill-opacity="0.42"/><rect x="307" y="615" width="12.0" height="8.0" fill="#2c5c24" fill-opacity="0.42"/><rect x="243" y="624.5" width="24.0" height="6.5" fill="#3a7630" fill-opacity="0.55"/><rect x="283" y="624.5" width="32.0" height="6.5" fill="#3a7630" fill-opacity="0.55"/><rect x="208" y="607" width="11.0" height="8.0" fill="#0c140c" fill-opacity="0.75"/><rect x="275" y="605" width="8.0" height="6.0" fill="#0c140c" fill-opacity="0.75"/><rect x="554.6" y="632.5" width="16.1" height="30.8" fill="#2e6625" fill-opacity="0.78"/><rect x="538.6" y="623" width="16.0" height="9.5" fill="#2c5c24" fill-opacity="0.42"/><rect x="564" y="616.4" width="40.0" height="21.4" fill="#2c5c24" fill-opacity="0.42"/><rect x="499.8" y="687.4" width="8.0" height="8.0" fill="#2e6625" fill-opacity="0.78"/><rect x="514.5" y="695.4" width="8.0" height="8.0" fill="#2e6625" fill-opacity="0.78"/><rect x="514.5" y="679.3" width="8.0" height="8.1" fill="#3a7630" fill-opacity="0.55"/><rect x="530.5" y="711.5" width="8.1" height="8.0" fill="#2e6625" fill-opacity="0.78"/><rect x="554.6" y="695.4" width="16.1" height="16.1" fill="#2e6625" fill-opacity="0.78"/><rect x="554.6" y="728.9" width="16.1" height="30.8" fill="#2e6625" fill-opacity="0.78"/><rect x="522.5" y="743.6" width="8.0" height="8.0" fill="#2e6625" fill-opacity="0.78"/><rect x="522.5" y="767.7" width="8.0" height="8.0" fill="#2e6625" fill-opacity="0.78"/><rect x="546.6" y="759.7" width="24.1" height="16.0" fill="#2e6625" fill-opacity="0.78"/><rect x="570.7" y="775.7" width="16.0" height="6.7" fill="#3a7630" fill-opacity="0.55"/><rect x="475.7" y="775.7" width="8.0" height="8.1" fill="#3a7630" fill-opacity="0.55"/><rect x="602.8" y="759.7" width="8.0" height="16.0" fill="#28561f" fill-opacity="0.75"/><rect x="479.7" y="663" width="4.0" height="9.6" fill="#28561f" fill-opacity="0.75"/><rect x="795.4" y="632.5" width="8.0" height="30.8" fill="#28561f" fill-opacity="0.75"/><rect x="795.4" y="727.5" width="8.0" height="57.5" fill="#3a7630" fill-opacity="0.55"/><rect x="802" y="615" width="9.5" height="9.5" fill="#2c5c24" fill-opacity="0.42"/><rect x="808.8" y="624.5" width="42.8" height="6.5" fill="#3a7630" fill-opacity="0.55"/><rect x="811.5" y="616" width="37.5" height="8.5" fill="#2c5c24" fill-opacity="0.42"/><rect x="849" y="616" width="10.6" height="8.5" fill="#2c5c24" fill-opacity="0.42"/><rect x="867.7" y="639" width="8.0" height="8.0" fill="#2e6625" fill-opacity="0.78"/><rect x="811.5" y="687.4" width="8.0" height="8.0" fill="#2e6625" fill-opacity="0.78"/><rect x="827.5" y="695.4" width="8.0" height="8.0" fill="#2e6625" fill-opacity="0.78"/><rect x="835.5" y="703.4" width="8.1" height="8.1" fill="#2e6625" fill-opacity="0.78"/><rect x="851.6" y="728.9" width="8.0" height="6.7" fill="#2e6625" fill-opacity="0.78"/><rect x="899.8" y="728.9" width="8.0" height="6.7" fill="#2e6625" fill-opacity="0.78"/><rect x="867.7" y="743.6" width="8.0" height="8.0" fill="#2e6625" fill-opacity="0.78"/><rect x="899.8" y="679.3" width="8.0" height="8.1" fill="#3a7630" fill-opacity="0.55"/><rect x="915.8" y="719.5" width="4.0" height="64.3" fill="#28561f" fill-opacity="0.75"/><rect x="873" y="624.5" width="42.8" height="8.0" fill="#3a7630" fill-opacity="0.55"/><rect x="882" y="616" width="9.7" height="8.5" fill="#2c5c24" fill-opacity="0.42"/><rect x="898.4" y="616" width="9.4" height="15.0" fill="#2c5c24" fill-opacity="0.42"/><rect x="1163.7" y="639" width="16.0" height="24.3" fill="#2e6625" fill-opacity="0.78"/><rect x="1179.7" y="632.5" width="8.1" height="6.5" fill="#2e6625" fill-opacity="0.78"/><rect x="1075.4" y="647.2" width="8.0" height="8.0" fill="#2e6625" fill-opacity="0.78"/><rect x="1107.5" y="687.4" width="8.0" height="8.0" fill="#2e6625" fill-opacity="0.78"/><rect x="1123.6" y="695.4" width="8.0" height="8.0" fill="#2e6625" fill-opacity="0.78"/><rect x="1123.6" y="679.3" width="8.0" height="8.1" fill="#3a7630" fill-opacity="0.55"/><rect x="1139.6" y="711.5" width="8.0" height="8.0" fill="#2e6625" fill-opacity="0.78"/><rect x="1163.7" y="695.4" width="16.0" height="16.1" fill="#2e6625" fill-opacity="0.78"/><rect x="1075.4" y="743.6" width="8.0" height="8.0" fill="#2e6625" fill-opacity="0.78"/><rect x="1131.6" y="743.6" width="8.0" height="8.0" fill="#2e6625" fill-opacity="0.78"/><rect x="1131.6" y="767.7" width="8.0" height="8.0" fill="#2e6625" fill-opacity="0.78"/><rect x="1155.7" y="743.6" width="24.0" height="32.1" fill="#2e6625" fill-opacity="0.78"/><rect x="1171.7" y="728.9" width="8.0" height="6.7" fill="#3a7630" fill-opacity="0.55"/><rect x="1179.7" y="775.7" width="21.3" height="6.7" fill="#3a7630" fill-opacity="0.55"/><rect x="1075.4" y="775.7" width="8.0" height="6.7" fill="#3a7630" fill-opacity="0.55"/><rect x="1083.4" y="623" width="105.6" height="9.5" fill="#2c5c24" fill-opacity="0.42"/><rect x="1194.5" y="648.5" width="5.3" height="29.5" fill="#28561f" fill-opacity="0.75"/></g></g></svg>
<div class="lbl" style="left:48.6px;top:95.0px">Core 1</div><div class="lbl" style="left:641.6px;top:95.0px">Core 2</div><div class="lbl" style="left:48.6px;top:340.6px">Core 3</div><div class="lbl" style="left:641.6px;top:340.6px">Core 4</div><div class="lbl" style="left:48.6px;top:587.4px">Core 5</div><div class="lbl" style="left:641.6px;top:587.4px">Core 6</div></body></html>
